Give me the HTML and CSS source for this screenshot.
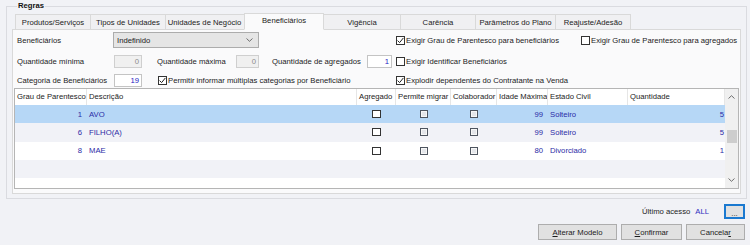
FILE: index.html
```html
<!DOCTYPE html>
<html>
  <head>
    <title>Regras</title>
    <link rel="stylesheet" href="styles.css">
  </head>
  <body>
    <div class="window">
      <fieldset class="group">
        <legend>Regras</legend>

        <div class="tabs">
          <div class="tab">Produtos/Serviços</div>
          <div class="tab">Tipos de Unidades</div>
          <div class="tab">Unidades de Negócio</div>
          <div class="tab active">Beneficiários</div>
          <div class="tab">Vigência</div>
          <div class="tab">Carência</div>
          <div class="tab">Parâmetros do Plano</div>
          <div class="tab">Reajuste/Adesão</div>
        </div>

        <div class="page">
          <!-- fields above the grid -->
          <div class="form">
            <span class="label col-a">Beneficiários</span>
            <div class="combo">
              <span>Indefinido</span>
              <svg width="7" height="4" viewBox="0 0 7 4"><path d="M0.5 0.5 L3.5 3.3 L6.5 0.5" fill="none" stroke="#606060" stroke-width="0.9"/></svg>
            </div>
            <label class="check col-g"><span class="box"><svg width="7" height="7" viewBox="0 0 7 7"><path d="M0.6 3.6 L2.6 5.6 L6.4 0.9" fill="none" stroke="#222" stroke-width="1"/></svg></span>Exigir Grau de Parentesco para beneficiários</label>
            <label class="check col-h"><span class="box"></span>Exigir Grau de Parentesco para agregados</label>

            <span class="label col-a">Quantidade mínima</span>
            <div class="field off col-b">0</div>
            <span class="label pad-c">Quantidade máxima</span>
            <div class="field off">0</div>
            <span class="label pad-e">Quantidade de agregados</span>
            <div class="field on">1</div>
            <label class="check col-g"><span class="box"></span>Exigir Identificar Beneficiários</label>

            <span class="label col-a">Categoria de Beneficiários</span>
            <div class="field on col-b">19</div>
            <label class="check wide"><span class="box"><svg width="7" height="7" viewBox="0 0 7 7"><path d="M0.6 3.6 L2.6 5.6 L6.4 0.9" fill="none" stroke="#222" stroke-width="1"/></svg></span>Permitir informar múltiplas categorias por Beneficiário</label>
            <label class="check col-g"><span class="box"><svg width="7" height="7" viewBox="0 0 7 7"><path d="M0.6 3.6 L2.6 5.6 L6.4 0.9" fill="none" stroke="#222" stroke-width="1"/></svg></span>Explodir dependentes do Contratante na Venda</label>
          </div>

          <div class="grid">
            <div class="cols">
              <div class="row head">
                <span>Grau de Parentesco</span>
                <span>Descrição</span>
                <span>Agregado</span>
                <span>Permite migrar</span>
                <span>Colaborador</span>
                <span>Idade Máxima</span>
                <span>Estado Civil</span>
                <span>Quantidade</span>
              </div>
              <div class="row sel">
                <span class="num">1</span>
                <span>AVO</span>
                <span class="mid"><i class="cb"></i></span>
                <span class="mid"><i class="cb grey"></i></span>
                <span class="mid"><i class="cb grey"></i></span>
                <span class="num">99</span>
                <span>Solteiro</span>
                <span class="num last">5</span>
              </div>
              <div class="row alt">
                <span class="num">6</span>
                <span>FILHO(A)</span>
                <span class="mid"><i class="cb"></i></span>
                <span class="mid"><i class="cb grey"></i></span>
                <span class="mid"><i class="cb grey"></i></span>
                <span class="num">99</span>
                <span>Solteiro</span>
                <span class="num last">5</span>
              </div>
              <div class="row">
                <span class="num">8</span>
                <span>MAE</span>
                <span class="mid"><i class="cb"></i></span>
                <span class="mid"><i class="cb grey"></i></span>
                <span class="mid"><i class="cb grey"></i></span>
                <span class="num">80</span>
                <span>Divorciado</span>
                <span class="num last">1</span>
              </div>
              <div class="row alt"></div>
            </div>
            <div class="vscroll">
              <div class="arrow">
                <svg width="7" height="4" viewBox="0 0 7 4"><path d="M0.5 3.5 L3.5 0.7 L6.5 3.5" fill="none" stroke="#606060" stroke-width="0.9"/></svg>
              </div>
              <div class="track"><div class="thumb"></div></div>
              <div class="arrow">
                <svg width="7" height="4" viewBox="0 0 7 4"><path d="M0.5 0.5 L3.5 3.3 L6.5 0.5" fill="none" stroke="#606060" stroke-width="0.9"/></svg>
              </div>
            </div>
          </div>
        </div>
      </fieldset>

      <div class="status">
        <span>Último acesso</span>
        <span class="user">ALL</span>
        <button class="more">...</button>
      </div>

      <div class="actions">
        <button class="btn btn-model"><u>A</u>lterar Modelo</button>
        <button class="btn btn-ok"><u>C</u>onfirmar</button>
        <button class="btn btn-cancel">Cancela<u>r</u></button>
      </div>
    </div>
  </body>
</html>
```

FILE: styles.css
```css
body {
  margin: 0;
  background: #f1f2f6;
  font-family: "Liberation Sans", Arial, sans-serif;
  font-size: 7.7px;
  color: #1b1b1b;
  overflow: hidden;
}

.window {
  padding: 1px 3px 0 6px;
}

/* group box "Regras" */
.group {
  margin: 0;
  padding: 2px 5px 4px 5px;
  border: 1px solid #dadbe0;
  min-width: 0;
}

.group legend {
  padding: 0 1px;
  margin-left: 5px;
  font-weight: bold;
  line-height: 10px;
  color: #111;
}

/* tab strip */
.tabs {
  display: flex;
  align-items: flex-end;
  height: 17px;
  margin-left: 3px;
  margin-bottom: -1px;
}

.tab {
  box-sizing: border-box;
  height: 16px;
  padding-top: 1px;
  line-height: 13px;
  text-align: center;
  white-space: nowrap;
  background: #f0f0f2;
  border: 1px solid #d9d9d9;
  border-left: none;
  color: #222;
}

.tab:nth-child(1) { width: 76px; border-left: 1px solid #d9d9d9; }
.tab:nth-child(2) { width: 75px; }
.tab:nth-child(3) { width: 80px; padding-right: 2px; }
.tab:nth-child(5) { width: 79px; padding-left: 2px; }
.tab:nth-child(6) { width: 75px; }
.tab:nth-child(7) { width: 80px; }
.tab:nth-child(8) { width: 75px; }

.tab.active {
  position: relative;
  z-index: 1;
  width: 80px;
  height: 17px;
  margin: 0 -2px;
  padding-top: 1px;
  line-height: 12px;
  background: #fafafb;
  border-left: 1px solid #d9d9d9;
  border-bottom-color: #fafafb;
}

/* tab page */
.page {
  box-sizing: border-box;
  height: 165px;
  padding: 0 1px;
  background: #fafafb;
  border: 1px solid #d9d9d9;
}

.form {
  display: grid;
  grid-template-columns: 96px 29px 94px 23px 108px 25px 189px 1fr;
  grid-template-rows: 20px 22px 16px;
  align-items: center;
  padding-left: 3px;
}

.label {
  white-space: nowrap;
}

.col-a {
  grid-column: 1;
}

.col-b {
  grid-column: 2;
  margin-left: 1px;
}

.pad-c {
  padding-left: 15px;
}

.pad-e {
  padding-left: 13px;
}

.combo {
  grid-column: 2 / span 3;
  box-sizing: border-box;
  height: 16px;
  display: flex;
  align-items: center;
  justify-content: space-between;
  padding: 0 5px 0 3px;
  background: #e5e5e5;
  border: 1px solid #acacac;
}

.field {
  box-sizing: border-box;
  height: 13px;
  line-height: 11px;
  padding-right: 2px;
  text-align: right;
  border: 1px solid #cfcfcf;
}

.field.off {
  background: #f0f0f0;
  color: #8a8a8a;
}

.field.on {
  background: #fff;
  color: #2222c4;
  border-color: #c4c4c4;
}

.check {
  display: flex;
  align-items: center;
  white-space: nowrap;
}

.col-g {
  grid-column: 7;
  padding-left: 4px;
}

.col-h {
  grid-column: 8;
}

.wide {
  grid-column: 3 / span 4;
  padding-left: 16px;
}

.box {
  box-sizing: border-box;
  width: 9px;
  height: 9px;
  margin-right: 1px;
  display: inline-flex;
  align-items: center;
  justify-content: center;
  background: #fff;
  border: 1px solid #333;
}

/* data grid */
.grid {
  box-sizing: border-box;
  height: 101px;
  display: flex;
  background: #fff;
  border: 1px solid #b5b5b5;
}

.cols {
  flex: 1;
}

.row {
  display: grid;
  grid-template-columns: 72px 270px 39px 55px 46px 51px 80px 97px;
  align-items: center;
  height: 18.3px;
  color: #2b2ba6;
}

.row > span {
  padding: 0 2px;
  white-space: nowrap;
  overflow: hidden;
}

.row.head {
  height: 16px;
  color: #1b1b1b;
}

.row.head > span {
  line-height: 16px;
  border-right: 1px solid #e6e6e6;
}

.row.sel {
  background: #b6d7f6;
}

.row.alt {
  background: #f1f2f7;
}

.row > .num {
  text-align: right;
  padding-right: 5px;
}

.row > .num.last {
  padding-right: 1px;
}

.row > .mid {
  display: flex;
  justify-content: center;
}

.cb {
  box-sizing: border-box;
  width: 9px;
  height: 8px;
  background: #fff;
  border: 1px solid #333;
}

.cb.grey {
  width: 8px;
  background: #e4e6ea;
  border-color: #4e5560;
  box-shadow: inset 0 0 0 1px #f7f7f7;
}

.vscroll {
  width: 13px;
  display: flex;
  flex-direction: column;
  background: #f0f0f0;
}

.arrow {
  height: 16px;
  display: flex;
  align-items: center;
  justify-content: center;
}

.track {
  flex: 1;
}

.thumb {
  height: 13px;
  margin: 25px 1px 0 2px;
  background: #cdcdcd;
}

/* footer */
.status {
  height: 15px;
  margin-top: 5px;
  padding-right: 2px;
  display: flex;
  justify-content: flex-end;
  align-items: center;
}

.user {
  margin-left: 5px;
  color: #3030c0;
}

button {
  font-family: inherit;
  font-size: inherit;
  color: #1b1b1b;
  padding: 0;
  margin: 0;
}

.more {
  box-sizing: border-box;
  width: 21px;
  height: 15px;
  margin-left: 15px;
  line-height: 16px;
  background: #e1e1e1;
  border: 2px solid #1a79d0;
}

.actions {
  margin-top: 5px;
  padding-right: 2px;
  display: flex;
  justify-content: flex-end;
  gap: 4px;
}

.btn {
  box-sizing: border-box;
  height: 16px;
  background: #e1e1e1;
  border: 1px solid #adadad;
}

.btn-model { width: 79px; }
.btn-ok { width: 61px; }
.btn-cancel { width: 59px; }
```
